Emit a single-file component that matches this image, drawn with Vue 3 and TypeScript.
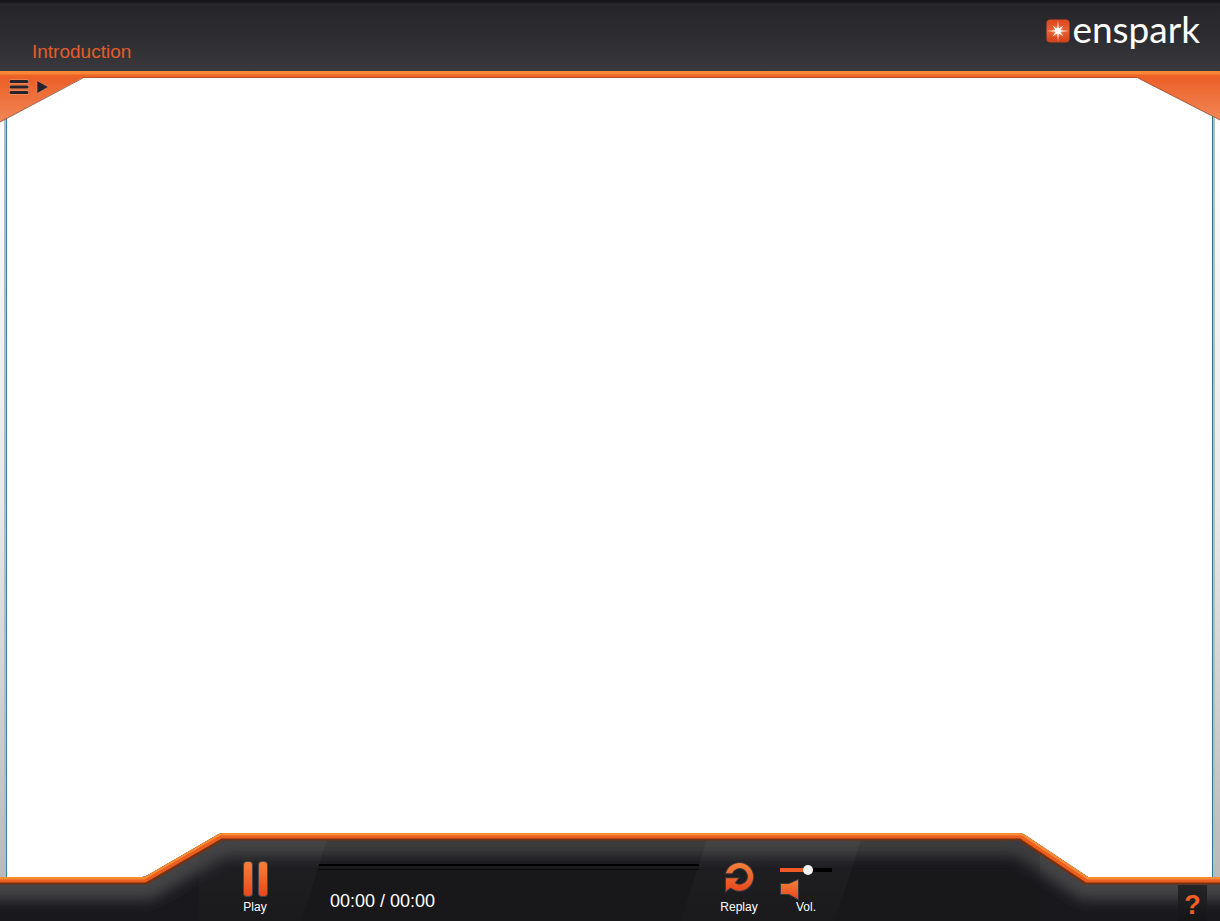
<script setup lang="ts">
import { computed, ref } from 'vue'

const title = ref('Introduction')
const elapsed = ref(0)
const duration = ref(0)
const volume = ref(54)

const pad = (n: number): string => String(n).padStart(2, '0')
const clock = (s: number): string => `${pad(Math.floor(s / 60))}:${pad(s % 60)}`
const timeText = computed(() => `${clock(elapsed.value)} / ${clock(duration.value)}`)
const volumeFill = computed(() => ({ '--fill': `${volume.value}%` }))
</script>

<template>
  <div class="player">
    <header class="top">
      <h1 class="title">{{ title }}</h1>
      <a class="brand" href="#" aria-label="enspark">
        <svg class="mark" viewBox="0 0 24 24" aria-hidden="true">
          <defs>
            <linearGradient id="markFill" x1="0" y1="0" x2="0" y2="1">
              <stop offset="0" stop-color="#dd471e" />
              <stop offset="0.5" stop-color="#ea6030" />
              <stop offset="1" stop-color="#cf4019" />
            </linearGradient>
            <radialGradient id="markGlow">
              <stop offset="0" stop-color="#ffe2c8" />
              <stop offset="1" stop-color="#f0703a" stop-opacity="0" />
            </radialGradient>
          </defs>
          <rect x="0.5" y="0.5" width="23" height="23" rx="4" fill="url(#markFill)" />
          <circle cx="12" cy="12" r="7" fill="url(#markGlow)" />
          <path
            fill="#fff"
            d="M12 1L12.7 9.7 17.5 6.5 14.3 11.3 23 12 14.3 12.7 17.5 17.5 12.7 14.3 12 23 11.3 14.3 6.5 17.5 9.7 12.7 1 12 9.7 11.3 6.5 6.5 11.3 9.7Z"
          />
          <circle cx="12" cy="12" r="2.8" fill="#fff" />
        </svg>
        <span class="word">enspark</span>
      </a>
    </header>

    <div class="band"></div>

    <main class="stage">
      <div class="gutter left"></div>
      <div class="slide"></div>
      <div class="gutter right"></div>
      <svg class="corner corner-left" viewBox="0 0 90 50" aria-hidden="true">
        <defs>
          <linearGradient id="cornerFill" x1="0" y1="0" x2="0" y2="1">
            <stop offset="0" stop-color="#eb5f27" />
            <stop offset="1" stop-color="#f28656" />
          </linearGradient>
        </defs>
        <path d="M0 0H84L0 45Z" fill="url(#cornerFill)" />
        <path d="M83 1L0 45" fill="none" stroke="#8a4a30" stroke-opacity="0.8" />
      </svg>
      <svg class="corner corner-right" viewBox="0 0 90 50" aria-hidden="true">
        <path d="M6 0H90V43Z" fill="url(#cornerFill)" />
        <path d="M8 1L90 43" fill="none" stroke="#8a4a30" stroke-opacity="0.8" />
      </svg>
      <nav class="menu">
        <button type="button" class="icon" aria-label="Menu">
          <svg width="20" height="16" viewBox="0 0 20 16" aria-hidden="true">
            <path
              d="M2 2.5H18M2 8H18M2 13.5H18"
              stroke="#f6a179"
              stroke-opacity="0.6"
              stroke-width="4.5"
              stroke-linecap="round"
            />
            <path d="M2 2.5H18M2 8H18M2 13.5H18" stroke="#26242a" stroke-width="3" stroke-linecap="round" />
          </svg>
        </button>
        <button type="button" class="icon" aria-label="Open panel">
          <svg width="13" height="16" viewBox="0 0 13 16" aria-hidden="true">
            <path d="M1 1.5L12.5 8 1 14.5Z" fill="#26242a" stroke="#f6a179" stroke-opacity="0.5" />
          </svg>
        </button>
      </nav>
    </main>

    <footer class="bottom">
      <svg class="console" viewBox="0 0 1220 88" preserveAspectRatio="none" aria-hidden="true">
        <defs>
          <clipPath id="hull">
            <path d="M0 44H142Q145 44 148 42L217 2Q220 0 224 0H1018Q1022 0 1025 2L1088 44H1220V88H0Z" />
          </clipPath>
          <filter id="soft" x="-10%" y="-60%" width="120%" height="220%">
            <feGaussianBlur stdDeviation="7" />
          </filter>
          <linearGradient id="panelShade" x1="0" y1="0" x2="0" y2="1">
            <stop offset="0" stop-color="#fff" stop-opacity="0.04" />
            <stop offset="1" stop-color="#fff" stop-opacity="0.01" />
          </linearGradient>
        </defs>
        <g clip-path="url(#hull)">
          <rect width="1220" height="88" fill="#19181c" />
          <path
            d="M-30 52H147L223 8H1019L1086 52H1250"
            fill="none"
            stroke="#454547"
            stroke-width="30"
            filter="url(#soft)"
          />
          <path d="M199 18L222 5H1021L1040 18V88H199Z" fill="#121115" fill-opacity="0.15" />
          <path d="M222 0H329L301 88H199V16Z" fill="url(#panelShade)" />
          <path d="M709 0H863L835 88H681Z" fill="url(#panelShade)" />
          <g fill="none" stroke-linejoin="round">
            <path d="M-5 48H146L222 4H1020L1086 48H1225" stroke="#74300f" stroke-width="7" />
            <path d="M-5 46.5H145L221 2.5H1021L1087 46.5H1225" stroke="#ec5d20" stroke-width="6" />
            <path d="M-5 45H144L220 1H1022L1088 45H1225" stroke="#f68c33" stroke-width="3" />
          </g>
        </g>
      </svg>

      <div class="controls">
        <div class="cell cell-play">
          <button type="button" class="tool">
            <svg width="30" height="38" viewBox="0 0 30 38" aria-hidden="true">
              <defs>
                <linearGradient id="ember" x1="0" y1="0" x2="0" y2="1">
                  <stop offset="0" stop-color="#f5803a" />
                  <stop offset="1" stop-color="#e8481c" />
                </linearGradient>
              </defs>
              <g fill="#47474a">
                <rect x="3" y="0" width="10" height="36" rx="4" />
                <rect x="18" y="0" width="10" height="36" rx="4" />
              </g>
              <g fill="url(#ember)">
                <rect x="4" y="1" width="8" height="34" rx="3" />
                <rect x="19" y="1" width="8" height="34" rx="3" />
              </g>
            </svg>
            <span class="caption">Play</span>
          </button>
        </div>

        <div class="cell cell-time">
          <input v-model.number="elapsed" class="seek" type="range" min="0" :max="duration" aria-label="Seek" />
          <span class="time">{{ timeText }}</span>
        </div>

        <div class="cell cell-audio">
          <button type="button" class="tool replay">
            <svg width="32" height="36" viewBox="0 0 32 36" aria-hidden="true">
              <path
                d="M3 12.3A13.8 13.8 0 1 1 7.6 26.5L3 30V17.3H15.2L11.6 22A8.3 8.3 0 1 0 9 12.3Z"
                fill="url(#ember)"
                stroke="#3a3a3d"
                stroke-width="2"
                paint-order="stroke"
              />
            </svg>
            <span class="caption">Replay</span>
          </button>
          <div class="volume">
            <input
              id="volume"
              v-model.number="volume"
              class="level"
              type="range"
              min="0"
              max="100"
              :style="volumeFill"
            />
            <div class="volume-row">
              <button type="button" class="icon" aria-label="Mute">
                <svg width="20" height="22" viewBox="0 0 20 22" aria-hidden="true">
                  <path
                    d="M1 5H9L18 1V20L9 15H1Z"
                    fill="url(#ember)"
                    stroke="#3a3a3d"
                    stroke-width="2"
                    paint-order="stroke"
                  />
                </svg>
              </button>
              <label class="caption" for="volume">Vol.</label>
            </div>
          </div>
        </div>

        <div class="cell cell-help">
          <button type="button" class="help" aria-label="Help">?</button>
        </div>
      </div>
    </footer>
  </div>
</template>

<style>
html,
body {
  margin: 0;
  background: #fff;
}
</style>

<style scoped>
.player {
  display: flex;
  flex-direction: column;
  min-height: 100vh;
  font-family: 'Liberation Sans', Arial, sans-serif;
}

button {
  margin: 0;
  padding: 0;
  border: 0;
  background: none;
  font: inherit;
  color: inherit;
  cursor: pointer;
}

svg {
  display: block;
}

.top {
  display: flex;
  justify-content: space-between;
  box-sizing: border-box;
  height: 71px;
  padding: 0 20px 0 32px;
  border-top: 3px solid #18181b;
  background: linear-gradient(#26262a, #2d2d31 50%, #39393d);
}

.title {
  align-self: flex-end;
  margin: 0 0 8px;
  font-size: 19px;
  font-weight: 400;
  line-height: 22px;
  color: #e35c2a;
}

.brand {
  display: flex;
  align-items: flex-start;
  gap: 2px;
  color: #fff;
  text-decoration: none;
}

.mark {
  width: 24px;
  height: 24px;
  margin-top: 16px;
}

.word {
  margin-top: 4px;
  font-family: Lato, sans-serif;
  font-size: 37px;
  line-height: 44px;
}

.band {
  height: 7px;
  background: linear-gradient(#f7853a 0 3px, #ee6424 4px 6px, #b5532a 6px);
}

.stage {
  position: relative;
  display: flex;
  flex: 1;
}

.slide {
  flex: 1;
  background: #fff;
  border-left: 1px solid #3d849f;
  border-right: 1px solid #2b7595;
}

.gutter {
  width: 4px;
  background: linear-gradient(#fff, #e9e9e9 50%, #b4b4b4);
}

.left {
  border-right: 2px solid #b4bcc0;
}

.right {
  width: 5px;
  border-left: 2px solid #b4bdc2;
}

.corner {
  position: absolute;
  top: -1px;
  width: 90px;
  height: 50px;
}

.corner-left {
  left: 0;
}

.corner-right {
  right: 0;
}

.menu {
  position: absolute;
  top: 1px;
  left: 9px;
  display: flex;
  gap: 7px;
}

.bottom {
  position: relative;
  height: 88px;
  margin-top: -88px;
}

.console {
  position: absolute;
  inset: 0;
  width: 100%;
  height: 100%;
}

.controls {
  position: relative;
  display: grid;
  grid-template-columns: minmax(0, 319fr) minmax(0, 380fr) minmax(0, 172fr) minmax(0, 349fr);
  height: 100%;
  color: #fff;
}

.cell {
  display: flex;
}

.cell-play {
  justify-content: flex-end;
  padding: 28px 44px 0 0;
}

.tool {
  display: flex;
  flex-direction: column;
  align-items: center;
  width: 40px;
}

.caption {
  font-size: 12px;
  line-height: 16px;
}

.cell-time {
  flex-direction: column;
  gap: 21px;
  padding-top: 31px;
}

.seek {
  display: block;
  width: 100%;
  height: 6px;
  margin: 0;
  appearance: none;
  background: linear-gradient(#000 0 2px, #1b1b1e 2px 5px, #050506 5px);
}

.seek::-webkit-slider-thumb {
  width: 0;
  height: 0;
  appearance: none;
}

.time {
  margin-left: 11px;
  font-size: 18px;
  line-height: 20px;
}

.cell-audio {
  gap: 21px;
  padding: 28px 0 0 20px;
}

.replay {
  gap: 2px;
}

.volume {
  padding-top: 4px;
}

.level {
  display: block;
  width: 52px;
  height: 10px;
  margin: 0;
  appearance: none;
  background: linear-gradient(90deg, #f05a24 var(--fill), #000 var(--fill)) center / 100% 4px no-repeat;
}

.level::-webkit-slider-thumb {
  width: 10px;
  height: 10px;
  appearance: none;
  border-radius: 50%;
  background: #f4f4f4;
}

.volume-row {
  display: flex;
  align-items: flex-start;
  padding-top: 4px;
}

.volume-row .caption {
  margin: 20px 0 0 -4px;
}

.cell-help {
  justify-content: flex-end;
  align-items: flex-end;
  padding-right: 13px;
}

.help {
  width: 29px;
  height: 36px;
  padding-top: 3px;
  background: linear-gradient(#252527, #151518);
  font-size: 27px;
  font-weight: 700;
  line-height: 30px;
  color: #f15f27;
}
</style>
